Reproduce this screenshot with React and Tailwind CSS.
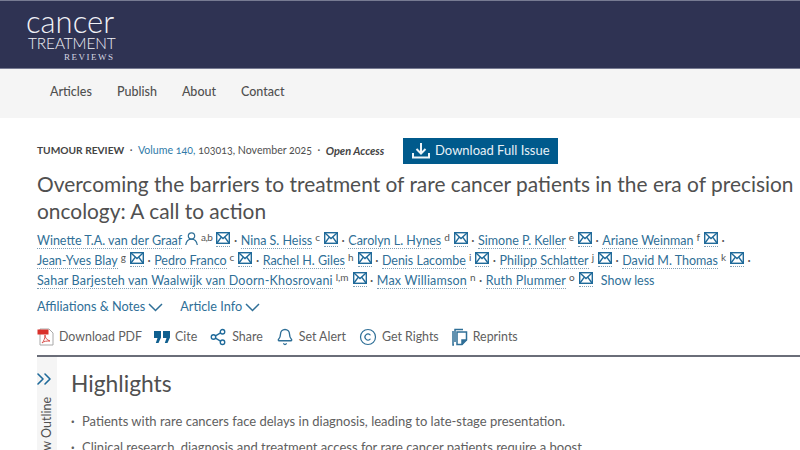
import { ChevronsRight, Bell, Copyright, Share2 } from 'lucide-react';

const authorRows = [
  [
    { name: 'Winette T.A. van der Graaf', sup: 'a,b', person: true },
    { name: 'Nina S. Heiss', sup: 'c' },
    { name: 'Carolyn L. Hynes', sup: 'd' },
    { name: 'Simone P. Keller', sup: 'e' },
    { name: 'Ariane Weinman', sup: 'f' },
  ],
  [
    { name: 'Jean-Yves Blay', sup: 'g' },
    { name: 'Pedro Franco', sup: 'c' },
    { name: 'Rachel H. Giles', sup: 'h' },
    { name: 'Denis Lacombe', sup: 'i' },
    { name: 'Philipp Schlatter', sup: 'j' },
    { name: 'David M. Thomas', sup: 'k' },
  ],
  [
    { name: 'Sahar Barjesteh van Waalwijk van Doorn-Khosrovani', sup: 'l,m', wide: true },
    { name: 'Max Williamson', sup: 'n', wide: true, noMail: true },
    { name: 'Ruth Plummer', sup: 'o', wide: true, last: true },
  ],
];

function MailIcon() {
  return (
    <svg width="14" height="12" viewBox="0 0 14 12" fill="none" stroke="#1f6a9a" strokeWidth="1.400" className="block">
      <rect x="0.700" y="0.700" width="12.600" height="10.600" />
      <path d="M1 1l6 5.500L13 1M1 11l4.300-5.800M13 11L8.700 5.200" />
    </svg>
  );
}

function PersonIcon() {
  return (
    <svg width="13" height="14" viewBox="0 0 13 14" fill="none" stroke="#2f6f97" strokeWidth="1.200" className="ml-[3px] -mt-[4px] shrink-0">
      <circle cx="6.500" cy="4" r="3.200" />
      <path d="M0.700 13c.6-3.300 2.700-5.800 5.800-5.800s5.200 2.500 5.800 5.800" />
    </svg>
  );
}

function Chevron() {
  return (
    <svg width="15" height="9" viewBox="0 0 15 9" fill="none" stroke="#2f6f97" strokeWidth="1.500" className="ml-[3px]">
      <path d="M1 1l6.500 6.500L14 1" />
    </svg>
  );
}

function DownloadIcon() {
  return (
    <svg width="18" height="16" viewBox="0 0 18 16" fill="none" stroke="#eef4f8" strokeWidth="2" className="shrink-0">
      <path d="M9 0v10M4.500 6L9 10.500 13.500 6" />
      <path d="M1 10v4.500h16V10" />
    </svg>
  );
}

function Author({ author }) {
  return (
    <>
      <span className={`border-b border-dotted border-[#7f9fb5] leading-[15px] ${author.wide ? 'tracking-[0.17px]' : ''}`}>{author.name}</span>
      {author.person && <PersonIcon />}
      <span className={`text-[10px] text-[#555] ml-[3px] -mt-[9px] leading-none ${author.person ? 'tracking-[-0.5px]' : ''}`}>{author.sup}</span>
      {!author.noMail && (
        <span className="ml-[4px] border-b border-dotted border-[#7f9fb5] pb-[2px] -mt-[3px]">
          <MailIcon />
        </span>
      )}
      {!author.last && <span className="mx-[3.500px] text-[#555]">·</span>}
    </>
  );
}

function PdfIcon() {
  return (
    <svg width="17" height="18" viewBox="0 0 17 18" className="shrink-0">
      <path d="M3 1h9l4 4v12H3z" fill="#fff" stroke="#a8a8a8" strokeWidth="1" />
      <rect x="0.500" y="1.500" width="11" height="5" fill="#d9312b" />
      <path d="M5 15c2-2 3-5 3-8 0 3 2 5 5 6-3 0-6 0-8 2z" fill="none" stroke="#d9534f" strokeWidth="1" />
    </svg>
  );
}

function QuoteIcon() {
  return (
    <svg width="16" height="14" viewBox="0 0 16 14" className="shrink-0 block" fill="#0f5f8f">
      <path d="M0 1h7v6.500L4.500 13H1.800l1.700-5H0z" />
      <path d="M9 1h7v6.500L13.500 13h-2.700l1.700-5H9z" />
    </svg>
  );
}

function ReprintsIcon() {
  return (
    <svg width="16" height="18" viewBox="0 0 16 18" className="shrink-0 block" fill="none" stroke="#2f6f97" strokeWidth="1.500">
      <path d="M3 14V1.500h8" />
      <path d="M1 3v14h1" />
      <path d="M5 4h9.500v8L10 16.500H5z" />
      <path d="M14.500 12H10v4.500" fill="#2f6f97" />
    </svg>
  );
}

export default function App() {
  return (
    <div className="w-[800px] h-[450px] overflow-hidden bg-white font-['Lato','Noto_Sans',sans-serif] text-[#505050]">
      {/* Header */}
      <div className="h-[69px] bg-[#2f3353] border-y border-[#777b92] pl-[26px] pt-[8px] text-[#f1f2f7] font-['Lato',sans-serif]">
        <div className="text-[31px] font-light leading-[24px]">cancer</div>
        <div className="text-[15.400px] font-light leading-[15px] mt-[3px] ml-[2px] tracking-[-0.100px]">TREATMENT</div>
        <div className="text-[9px] leading-[10px] mt-[1px] ml-[38px] tracking-[1.500px] text-[#d3d6e2] font-['Liberation_Serif',serif]">REVIEWS</div>
      </div>

      {/* Nav */}
      <div className="h-[49px] bg-[#f5f5f5] flex items-center pl-[50px] pb-[3px] gap-[25px] text-[12.500px] font-medium text-[#505050]">
        <span>Articles</span>
        <span>Publish</span>
        <span>About</span>
        <span>Contact</span>
      </div>

      <div className="pl-[37px] pt-[20px]">
        {/* Meta row */}
        <div className="flex items-center h-[26px] text-[10.600px] oldstyle-nums">
          <span className="font-bold text-[10.200px] text-[#444]">TUMOUR REVIEW</span>
          <span className="mx-[5.500px]">·</span>
          <span className="text-[#2f7aa8]">Volume 140,</span>
          <span className="ml-[3px]">103013, November 2025</span>
          <span className="mx-[5.500px]">·</span>
          <span className="font-bold italic text-[11px] text-[#444]">Open Access</span>
          <button className="ml-[19px] w-[155px] h-[26px] bg-[#005a8c] text-[#e8f1f7] flex items-center justify-center gap-[5px] text-[13px]">
            <DownloadIcon />
            Download Full Issue
          </button>
        </div>

        {/* Title */}
        <h1 className="mt-[7px] w-[770px] text-[20.900px] leading-[26.500px] text-[#505050] whitespace-nowrap">
          Overcoming the barriers to treatment of rare cancer patients in the era of precision
          <br />
          oncology: A call to action
        </h1>

        {/* Authors */}
        <div className="mt-[7px] text-[12.500px] text-[#2f6f97]">
          {authorRows.map((row, i) => (
            <div key={i} className="flex items-center h-[20px] whitespace-nowrap">
              {row.map((author) => (
                <Author key={author.name} author={author} />
              ))}
              {i === 2 && <span className="ml-[8px]">Show less</span>}
            </div>
          ))}
        </div>

        {/* Affiliations */}
        <div className="mt-[6px] h-[20px] flex items-center text-[12.700px] text-[#2f6f97]">
          <span>Affiliations &amp; Notes</span>
          <Chevron />
          <span className="ml-[17px]">Article Info</span>
          <Chevron />
        </div>

        {/* Toolbar */}
        <div className="mt-[5px] h-[30px] flex items-center text-[12.400px] text-[#606060] border-b-2 border-[#6a6d78] pb-[3px] box-content">
          <PdfIcon />
          <span className="ml-[5px]">Download PDF</span>
          <span className="ml-[12px]"><QuoteIcon /></span>
          <span className="ml-[5px]">Cite</span>
          <Share2 className="ml-[12px] w-[18px] h-[18px] text-[#1f6a9a]" strokeWidth={1.800} />
          <span className="ml-[5px]">Share</span>
          <Bell className="ml-[13px] w-[18px] h-[18px] text-[#2f6f97]" strokeWidth={1.800} />
          <span className="ml-[5px]">Set Alert</span>
          <Copyright className="ml-[13px] w-[18px] h-[18px] text-[#2f6f97]" strokeWidth={1.600} />
          <span className="ml-[5px]">Get Rights</span>
          <span className="ml-[13px]"><ReprintsIcon /></span>
          <span className="ml-[5px]">Reprints</span>
        </div>

        {/* Body */}
        <div className="flex">
          <div className="w-[20px] h-[93px] bg-[#f5f5f5] flex flex-col items-center shrink-0 overflow-hidden">
            <ChevronsRight className="w-[24px] h-[24px] mt-[10px] -ml-[7px] text-[#1f6a9a] shrink-0" strokeWidth={1.600} />
            <div className="mt-[6px] ml-[1px] shrink-0 text-[12.500px] whitespace-nowrap [writing-mode:vertical-rl] rotate-180">View Outline</div>
          </div>
          <div className="ml-[14px]">
            <h2 className="mt-[12px] text-[22.800px] leading-[28px] text-[#505050]">Highlights</h2>
            <ul className="mt-[15px] text-[13px] text-[#606060]">
              <li className="flex h-[26px]"><span className="w-[11px] font-bold">·</span>Patients with rare cancers face delays in diagnosis, leading to late-stage presentation.</li>
              <li className="flex h-[26px]"><span className="w-[11px] font-bold">·</span>Clinical research, diagnosis and treatment access for rare cancer patients require a boost.</li>
            </ul>
          </div>
        </div>
      </div>
    </div>
  );
}
